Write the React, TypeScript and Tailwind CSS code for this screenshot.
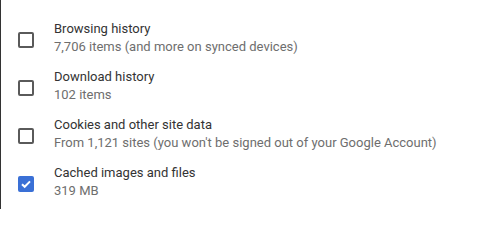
import React from "react";

const items = [
  { title: "Browsing history", sub: "7,706 items (and more on synced devices)", checked: false },
  { title: "Download history", sub: "102 items", checked: false },
  { title: "Cookies and other site data", sub: "From 1,121 sites (you won't be signed out of your Google Account)", checked: false },
  { title: "Cached images and files", sub: "319 MB", checked: true },
];

function Box({ checked }: { checked: boolean }) {
  if (checked) {
    return (
      <div className="w-[16px] h-[16px] rounded-[2px] bg-[#3a70d6] flex items-center justify-center shrink-0">
        <svg width="12" height="12" viewBox="0 0 12 12">
          <path d="M2 6.2 L4.7 8.8 L10 3.4" fill="none" stroke="white" strokeWidth="2" />
        </svg>
      </div>
    );
  }
  return <div className="w-[16px] h-[16px] rounded-[2px] border-2 border-[#5a5a5a] shrink-0" />;
}

export default function App() {
  return (
    <div
      className="w-[486px] h-[209px] bg-white border-l border-[#333] pt-[14px] overflow-hidden"
      style={{ fontFamily: "Roboto, 'Liberation Sans', sans-serif" }}
    >
      {items.map((it) => (
        <div key={it.title} className="h-[48px] flex items-center pl-[17px]">
          <div className="mt-[4px]">
            <Box checked={it.checked} />
          </div>
          <div className="ml-[20px] flex flex-col">
            <div className="text-[13px] leading-[18px] text-[#333333]">{it.title}</div>
            <div className="text-[13px] leading-[18px] text-[#6e6e6e]">{it.sub}</div>
          </div>
        </div>
      ))}
    </div>
  );
}
